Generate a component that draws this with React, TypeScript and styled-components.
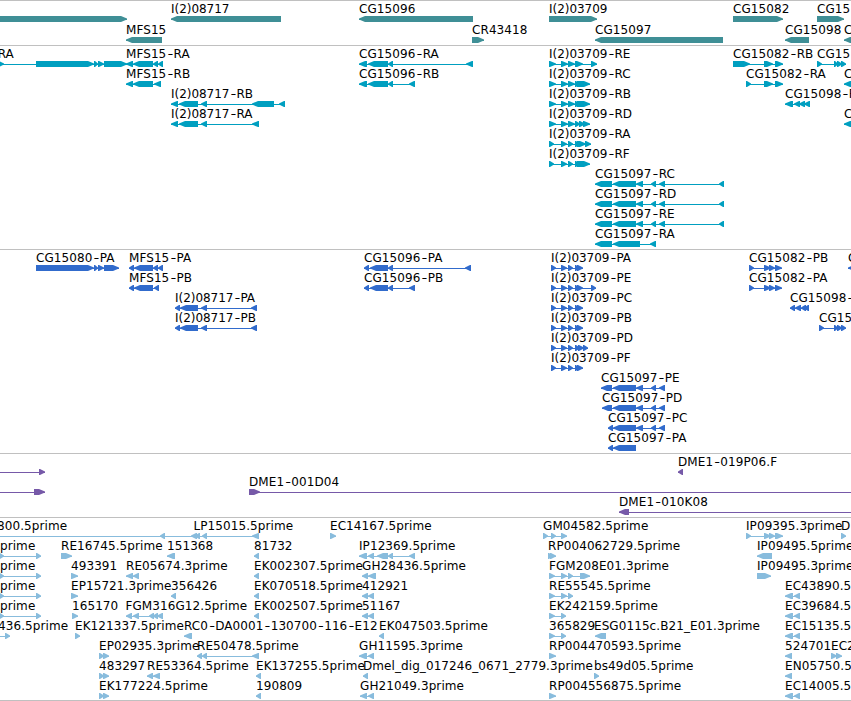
import React from "react";
import styled, { createGlobalStyle } from "styled-components";

const GlobalStyle = createGlobalStyle`
  body {
    margin: 0;
    background: #fff;
    overflow: hidden;
  }
`;

type Direction = "L" | "R";
// [label, label x, direction, exons as "start-end", optional extent of the connecting line]
type Feature = [string, number, Direction, string, string?];

interface TrackData {
  name: string;
  color: string;
  rowHeight: number;
  padding: number;
  rows: Feature[][];
}

const CG15097_R = "595-612 613-636 636-643 651-656 659-665 719-724";
const L2_HEAD = "549-556 561-568 568-575";
const L2_P = "551-556 561-567 568-573 575-579 577-583";
const EP = "99-104 103-109";

const tracks: TrackData[] = [
  {
    name: "genes",
    color: "#3f8f96",
    rowHeight: 21,
    padding: 2,
    rows: [
      [
        ["", 0, "R", "0-127"],
        ["I(2)08717", 171, "L", "171-281"],
        ["CG15096", 359, "L", "359-473"],
        ["I(2)03709", 549, "R", "549-597"],
        ["CG15082", 733, "R", "733-783"],
        ["CG15", 817, "R", "817-844"],
      ],
      [
        ["MFS15", 126, "L", "126-162"],
        ["CR43418", 472, "R", "472-484"],
        ["CG15097", 595, "L", "595-723"],
        ["CG15098", 785, "L", "785-809"],
        ["C", 844, "L", "844-870"],
      ],
    ],
  },
  {
    name: "transcripts",
    color: "#009fc0",
    rowHeight: 20,
    padding: 3,
    rows: [
      [
        ["CG15080-RA", -66, "R", "-2-4 36-94 94-98 98-104 104-127"],
        ["MFS15-RA", 126, "L", "126-133 133-153 153-158 158-163"],
        ["CG15096-RA", 359, "L", "359-367 368-388 388-393 466-473"],
        ["I(2)03709-RE", 549, "R", L2_HEAD + " 575-583 591-597"],
        ["CG15082-RB", 733, "R", "733-750 764-773 775-783"],
        ["CG15", 817, "R", "817-822 834-838 837-842 841-846"],
      ],
      [
        ["MFS15-RB", 126, "L", "126-133 133-153 154-161"],
        ["CG15096-RB", 359, "L", "359-367 368-388 388-393 409-415"],
        ["I(2)03709-RC", 549, "R", L2_HEAD + " 575-580 577-590"],
        ["CG15082-RA", 746, "R", "746-751 764-773 775-783"],
        ["C", 844, "L", "844-870"],
      ],
      [
        ["I(2)08717-RB", 171, "L", "171-178 179-198 201-207 252-274 279-285"],
        ["I(2)03709-RB", 549, "R", L2_HEAD + " 575-580 577-590"],
        ["CG15098-RA", 785, "L", "785-793 794-800 799-805 804-810"],
      ],
      [
        ["I(2)08717-RA", 171, "L", "171-178 179-198 201-207 252-259"],
        ["I(2)03709-RD", 549, "R", L2_HEAD + " 575-580 579-585 583-590"],
        ["C", 844, "L", "844-870"],
      ],
      [["I(2)03709-RA", 549, "R", "549-554 561-567 568-573 575-580 577-586 585-591"]],
      [["I(2)03709-RF", 549, "R", "549-554 561-567 568-573 575-580 577-590"]],
      [["CG15097-RC", 595, "L", CG15097_R]],
      [["CG15097-RD", 595, "L", CG15097_R]],
      [["CG15097-RE", 595, "L", CG15097_R]],
      [["CG15097-RA", 595, "L", "595-612 613-640 650-656"]],
    ],
  },
  {
    name: "proteins",
    color: "#316bcc",
    rowHeight: 20,
    padding: 3,
    rows: [
      [
        ["CG15080-PA", 36, "R", "36-94 94-98 98-104 104-119"],
        ["MFS15-PA", 129, "L", "129-134 134-153 153-158 158-163"],
        ["CG15096-PA", 364, "L", "364-369 370-388 388-393 465-471"],
        ["I(2)03709-PA", 551, "R", L2_P],
        ["CG15082-PB", 749, "R", "749-754 764-771 769-775 775-782"],
        ["C", 848, "L", "848-870"],
      ],
      [
        ["MFS15-PB", 129, "L", "129-134 134-153 154-159"],
        ["CG15096-PB", 364, "L", "364-369 370-388 388-393 409-415"],
        ["I(2)03709-PE", 551, "R", L2_P + " 591-596"],
        ["CG15082-PA", 749, "R", "749-754 764-771 769-775 775-782"],
      ],
      [
        ["I(2)08717-PA", 175, "L", "175-180 180-198 201-207 251-257"],
        ["I(2)03709-PC", 551, "R", L2_P],
        ["CG15098-PA", 790, "L", "790-795 795-801 801-806 804-809"],
      ],
      [
        ["I(2)08717-PB", 175, "L", "175-180 180-198 201-207 251-257"],
        ["I(2)03709-PB", 551, "R", L2_P],
        ["CG15", 819, "R", "819-824 834-838 837-842 841-846"],
      ],
      [["I(2)03709-PD", 551, "R", "551-556 561-567 568-573 575-580 578-584 583-588"]],
      [["I(2)03709-PF", 551, "R", L2_P]],
      [["CG15097-PE", 601, "L", "601-612 613-636 636-643 651-656 659-665"]],
      [["CG15097-PD", 602, "L", "602-612 613-636 636-643 651-656 659-665"]],
      [["CG15097-PC", 608, "L", "608-613 613-636 636-643 651-656 659-665"]],
      [["CG15097-PA", 608, "L", "608-613 613-636"]],
    ],
  },
  {
    name: "clones",
    color: "#7659a8",
    rowHeight: 20,
    padding: 3,
    rows: [
      [
        ["", 0, "R", "39-45", "0-45"],
        ["DME1-019P06.F", 678, "L", "678-683"],
      ],
      [
        ["", 0, "R", "34-45", "0-45"],
        ["DME1-001D04", 249, "R", "249-260", "249-860"],
      ],
      [["DME1-010K08", 619, "L", "619-629", "619-860"]],
    ],
  },
  {
    name: "ests",
    color: "#88bcdd",
    rowHeight: 20,
    padding: 2,
    rows: [
      [
        ["800.5prime", -3, "L", "160-165 191-197", "0-197"],
        ["LP15015.5prime", 193.5, "L", "195-200 202-207 252-259"],
        ["EC14167.5prime", 330, "R", "330-336"],
        ["GM04582.5prime", 543, "R", "543-548 551-556 561-567"],
        ["IP09395.3prime", 746, "R", "746-751 764-771 769-775 775-783"],
        ["D", 841, "R", "841-846"],
      ],
      [
        ["prime", 0, "R", "-1-4 36-41"],
        ["RE16745.5prime", 61, "R", "61-72"],
        ["151368", 167, "L", "167-175"],
        ["81732", 254, "L", "254-259"],
        ["IP12369.5prime", 359, "L", "359-367 368-374 377-388 388-393 409-415"],
        ["RP004062729.5prime", 548, "R", "548-553 550-556"],
        ["IP09495.5prime", 757, "L", "757-772"],
      ],
      [
        ["prime", 0, "R", "-1-4 36-41"],
        ["493391", 71, "R", "71-78"],
        ["RE05674.3prime", 126, "L", "126-133 133-139"],
        ["EK002307.5prime", 254, "L", "254-259"],
        ["GH28436.5prime", 362, "L", "362-368 368-376"],
        ["FGM208E01.3prime", 549, "R", "549-555 561-567 568-573 580-590"],
        ["IP09495.3prime", 757, "R", "757-771"],
      ],
      [
        ["prime", 0, "R", "-1-4 36-41"],
        ["EP15721.3prime", 71, "R", "71-78"],
        ["356426", 171, "L", "171-176"],
        ["EK070518.5prime", 254, "L", "254-259"],
        ["412921", 362, "L", "362-368 368-374"],
        ["RE55545.5prime", 549, "R", "549-555 561-567 568-573"],
        ["EC43890.5prime", 785, "L", "785-793 794-800"],
      ],
      [
        ["prime", 0, "R", "-1-4 36-41"],
        ["165170", 72, "R", "72-78"],
        ["FGM316G12.5prime", 125.5, "L", "126-132 133-139 149-154 153-158 157-163"],
        ["EK002507.5prime", 254, "L", "254-259"],
        ["51167", 362, "L", "362-368 368-374"],
        ["EK242159.5prime", 549, "R", "549-555 561-566"],
        ["EC39684.5prime", 785, "L", "785-793 794-800"],
      ],
      [
        ["436.5prime", -2, "R", "5-10", "0-10"],
        ["EK121337.5prime", 75, "R", "75-80"],
        ["RC0-DA0001-130700-116-E12", 184, "L", "184-192"],
        ["EK047503.5prime", 379, "L", "379-384"],
        ["365829", 549, "R", "549-555 561-566"],
        ["ESG0115c.B21_E01.3prime", 594, "L", "595-606"],
        ["EC15135.5prime", 785, "L", "785-793 794-800"],
      ],
      [
        ["EP02935.3prime", 99, "R", EP],
        ["RE50478.5prime", 197, "L", "197-202 202-207 252-259"],
        ["GH11595.3prime", 359, "L", "359-367 368-374"],
        ["RP004470593.5prime", 549, "R", "549-556"],
        ["524701", 785, "L", "785-792"],
        ["EC2", 831, "R", "831-837 836-842"],
      ],
      [
        ["483297", 99, "R", EP],
        ["RE53364.5prime", 147, "L", "147-153 153-160"],
        ["EK137255.5prime", 256, "L", "256-261"],
        ["Dmel_dig_017246_0671_2779.3prime", 363, "L", "363-368"],
        ["bs49d05.5prime", 594, "R", "594-599"],
        ["EN05750.5prime", 785, "L", "785-792"],
      ],
      [
        ["EK177224.5prime", 99, "R", EP],
        ["190809", 256, "L", "256-261"],
        ["GH21049.3prime", 360, "L", "360-367 368-374"],
        ["RP004556875.5prime", 549, "R", "549-556"],
        ["EC14005.5prime", 785, "L", "785-793 794-800"],
      ],
    ],
  },
];

const Browser = styled.main`
  display: flex;
  flex-direction: column;
  width: 851px;
  height: 701px;
  overflow: hidden;
  background: #fff;
  color: #000;
  font: 12px/14px "DejaVu Sans", sans-serif;
`;

const Track = styled.section<{ $padding: number; $color: string }>`
  flex: none;
  border-top: 1px solid #c0c0c0;
  padding-bottom: ${(p) => p.$padding}px;
  color: ${(p) => p.$color};
  &:last-child {
    border-bottom: 1px solid #c0c0c0;
  }
`;

const Row = styled.div<{ $height: number }>`
  position: relative;
  height: ${(p) => p.$height}px;
`;

const Label = styled.span<{ $x: number; $tight: boolean }>`
  position: absolute;
  top: 1px;
  left: ${(p) => p.$x}px;
  color: #000;
  letter-spacing: ${(p) => (p.$tight ? -0.04 : 0.08)}px;
  white-space: nowrap;
`;

const Hyphen = styled.span`
  padding: 0 1.4px;
  text-shadow: 1px 0 0 currentColor;
`;

const Glyph = styled.svg<{ $x: number }>`
  position: absolute;
  top: 15px;
  left: ${(p) => p.$x}px;
  fill: currentColor;
`;

const parseRange = (text: string): [number, number] => {
  const m = /^(-?\d+)-(\d+)$/.exec(text)!;
  return [Number(m[1]), Number(m[2])];
};

function arrowPoints(start: number, end: number, dir: Direction) {
  const tip = Math.min(6, end - start - 1);
  return dir === "R"
    ? `${start},0 ${end - tip},0 ${end},2.6 ${end},3.6 ${end - tip},6 ${start},6`
    : `${end},0 ${start + tip},0 ${start},2.6 ${start},3.6 ${start + tip},6 ${end},6`;
}

function FeatureLabel({ text, x }: { text: string; x: number }) {
  return (
    <Label $x={x} $tight={text.startsWith("I(2)")}>
      {text.split("-").map((part, i) => (
        <React.Fragment key={i}>
          {i > 0 && <Hyphen>-</Hyphen>}
          {part}
        </React.Fragment>
      ))}
    </Label>
  );
}

function FeatureGlyph({ feature }: { feature: Feature }) {
  const [, , dir, exons, extent] = feature;
  const ranges = exons.split(" ").map(parseRange);
  const [x0, x1] = extent ? parseRange(extent) : [ranges[0][0], ranges[ranges.length - 1][1]];
  return (
    <Glyph $x={x0} width={x1 - x0} height={6} viewBox={`${x0} 0 ${x1 - x0} 6`}>
      <rect x={x0} y={3} width={x1 - x0} height={1} />
      {ranges.map(([a, b], i) => (
        <polygon key={i} points={arrowPoints(a, b, dir)} />
      ))}
    </Glyph>
  );
}

export default function App() {
  return (
    <>
      <GlobalStyle />
      <Browser>
        {tracks.map((t) => (
          <Track key={t.name} $padding={t.padding} $color={t.color}>
            {t.rows.map((row, r) => (
              <Row key={r} $height={t.rowHeight}>
                {row.map((f, i) => (
                  <React.Fragment key={i}>
                    {f[0] && <FeatureLabel text={f[0]} x={f[1]} />}
                    <FeatureGlyph feature={f} />
                  </React.Fragment>
                ))}
              </Row>
            ))}
          </Track>
        ))}
      </Browser>
    </>
  );
}
